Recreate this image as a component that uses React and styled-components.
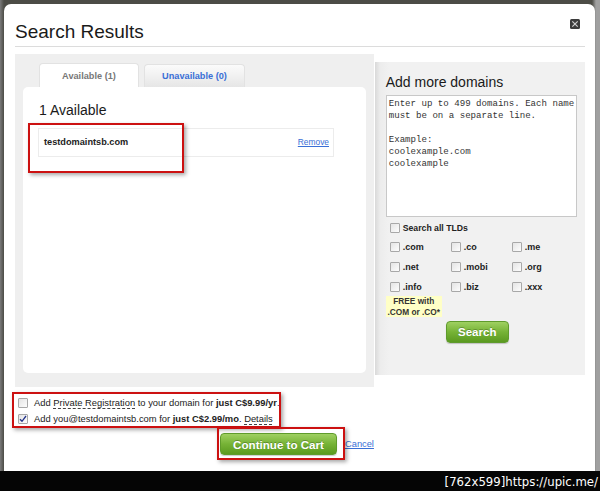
import React from "react";
import styled, { createGlobalStyle } from "styled-components";

const Global = createGlobalStyle`
  html, body { margin: 0; padding: 0; }
  body { font-family: "Liberation Sans", Arial, sans-serif; color: #222; }
`;

const Frame = styled.div`
  width: 600px;
  height: 491px;
  display: flex;
  flex-direction: column;
  background: linear-gradient(90deg, #7a7a7a 0px, #4c4c46 4px, #4c4c46 592px, #a0a0a0 596px);
  overflow: hidden;
`;

const Modal = styled.div`
  margin: 4px 5px 0 4px;
  height: 467px;
  background: #fff;
  border-radius: 7px 7px 0 0;
  padding: 0 10px 0 11px;
  box-sizing: border-box;
  display: flex;
  flex-direction: column;
`;

const Header = styled.div`
  display: flex;
  align-items: flex-start;
  justify-content: space-between;
  padding: 17px 0 3px;
  border-bottom: 1px solid #dcdcdc;
`;

const Title = styled.h1`
  margin: 0;
  font-size: 19px;
  line-height: 22px;
  font-weight: normal;
  color: #1a1a1a;
`;

const CloseBtn = styled.div`
  width: 10px;
  height: 10px;
  margin: -2px 5px 0 0;
  display: flex;
`;

const Body = styled.div`
  display: flex;
  align-items: flex-start;
  gap: 1px;
  margin-top: 7px;
`;

const LeftPanel = styled.div`
  width: 360px;
  box-sizing: border-box;
  background: #efefef;
  padding: 9px 8px 14px;
  display: flex;
  flex-direction: column;
`;

const Tabs = styled.div`
  display: flex;
  gap: 5px;
  margin-left: 16px;
`;

const Tab = styled.div`
  width: ${p => (p.$active ? 100 : 101)}px;
  height: ${p => (p.$active ? 24 : 23)}px;
  margin-top: ${p => (p.$active ? 0 : 1)}px;
  box-sizing: border-box;
  display: flex;
  align-items: center;
  justify-content: center;
  font-size: 9.2px;
  font-weight: bold;
  border: 1px solid #e2e2e2;
  border-bottom: none;
  border-radius: 4px 4px 0 0;
  color: ${p => (p.$active ? "#777" : "#3a6fd6")};
  background: ${p => (p.$active ? "#fff" : "linear-gradient(#fbfbfb, #e6e6e6)")};
`;

const ResultsBox = styled.div`
  position: relative;
  height: 286px;
  background: #fff;
  border-radius: 5px;
  padding: 15px 0 0 15px;
  box-sizing: border-box;
`;

const Heading = styled.h2`
  margin: 0 0 10px 1px;
  font-size: 14px;
  line-height: 16px;
  font-weight: normal;
  color: #1a1a1a;
`;

const DomainRow = styled.div`
  width: 296px;
  height: 29px;
  box-sizing: border-box;
  border: 1px solid #ececec;
  display: flex;
  align-items: center;
  justify-content: space-between;
  padding: 0 4px 1px 5px;
`;

const DomainName = styled.span`
  font-size: 9.2px;
  font-weight: bold;
  color: #222;
`;

const Link = styled.a`
  font-size: ${p => p.$size || 8.4}px;
  color: #3a6fd6;
  text-decoration: underline;
  cursor: pointer;
`;

const Annotation = styled.div`
  position: absolute;
  left: ${p => p.$l}px;
  top: ${p => p.$t}px;
  width: ${p => p.$w}px;
  height: ${p => p.$h}px;
  box-sizing: border-box;
  border: 2px solid #cc1111;
  box-shadow: 2px 2px 4px rgba(0, 0, 0, 0.35);
  pointer-events: none;
`;

const RightPanel = styled.div`
  width: 211px;
  height: 313px;
  margin-top: 8px;
  box-sizing: border-box;
  background: linear-gradient(90deg, #d9d9d9 0px, #ececec 5px, #f1f1f1 14px);
  padding: 12px 0 0 11px;
  display: flex;
  flex-direction: column;
`;

const SubHeading = styled.h3`
  margin: 0 0 5px;
  font-size: 14px;
  line-height: 16px;
  font-weight: normal;
  color: #1a1a1a;
`;

const DomainsInput = styled.div`
  width: 191px;
  height: 122px;
  box-sizing: border-box;
  border: 1px solid #c8c8c8;
  background: #fff;
  padding: 2px 2px;
  font-family: "Liberation Mono", "Courier New", monospace;
  font-size: 9.1px;
  line-height: 12px;
  color: #333;
  white-space: pre;
  overflow: hidden;
`;

const CheckRow = styled.label`
  display: flex;
  align-items: center;
  gap: ${p => p.$gap || 3}px;
  height: ${p => p.$h || 12}px;
  font-size: ${p => p.$size || 9}px;
  font-weight: ${p => (p.$bold ? "bold" : "normal")};
  color: #222;
  white-space: nowrap;
`;

const Box = styled.span`
  width: 10px;
  height: 10px;
  box-sizing: border-box;
  border: 1px solid #a8a8a8;
  border-radius: 1px;
  background: linear-gradient(135deg, #e4e4e4, #fdfdfd);
  display: flex;
  align-items: center;
  justify-content: center;
  flex: none;
`;

const Check = ({ checked }) => (
  <Box>
    {checked && (
      <svg width="8" height="8" viewBox="0 0 8 8">
        <path d="M1 4.2 L3 6.3 L7 1" fill="none" stroke="#23338a" strokeWidth="1.3" />
      </svg>
    )}
  </Box>
);

const TldArea = styled.div`
  margin: 5px 0 0 4px;
  display: flex;
  flex-direction: column;
`;

const TldGrid = styled.div`
  display: grid;
  grid-template-columns: 61px 61px 61px;
  row-gap: 8px;
  margin-top: 7px;
`;

const FreeBadge = styled.div`
  width: 56px;
  margin: 3px 0 0 -4px;
  background: #ffffc6;
  font-size: 8.3px;
  font-weight: bold;
  line-height: 10.5px;
  text-align: center;
  color: #333;
`;

const GreenButton = styled.button`
  width: ${p => p.$w}px;
  height: 22px;
  padding: 0;
  border: 1px solid #5f9b2c;
  border-radius: 4px;
  background: linear-gradient(#9fd061, #76b336 50%, #5b9a20);
  color: #fff;
  font-family: "Liberation Sans", Arial, sans-serif;
  font-size: ${p => p.$size}px;
  font-weight: bold;
  text-shadow: 0 -1px 0 rgba(0, 0, 0, 0.25);
  box-shadow: 0 1px 1px rgba(0, 0, 0, 0.2);
  cursor: pointer;
`;

const SearchWrap = styled.div`
  margin: 4px 0 0 60px;
  display: flex;
`;

const Options = styled.div`
  position: relative;
  margin: 8px 0 0 3px;
  display: flex;
  flex-direction: column;
  align-self: flex-start;
`;

const OptionText = styled.span`
  line-height: 16px;
`;

const Dotted = styled.span`
  text-decoration-line: underline;
  text-decoration-style: dashed;
  text-decoration-color: #444;
  text-underline-offset: 2px;
`;

const Actions = styled.div`
  position: relative;
  display: flex;
  align-items: center;
  gap: 8px;
  margin: 6px 0 0 205px;
`;

const BottomBar = styled.div`
  height: 20px;
  background: #050505;
  color: #fff;
  display: flex;
  align-items: center;
  justify-content: flex-end;
  padding-right: 2px;
  font-family: "DejaVu Sans Condensed", "DejaVu Sans", sans-serif;
  font-size: 13px;
`;

const tlds = [".com", ".co", ".me", ".net", ".mobi", ".org", ".info", ".biz", ".xxx"];

export default function App() {
  return (
    <>
      <Global />
      <Frame>
        <Modal>
          <Header>
            <Title>Search Results</Title>
            <CloseBtn>
              <svg width="10" height="10" viewBox="0 0 10 10">
                <rect x="0" y="0" width="10" height="10" rx="1.5" fill="#3c3c3c" />
                <path d="M2.3 2.3 L7.7 7.7 M7.7 2.3 L2.3 7.7" stroke="#cfcfcf" strokeWidth="1.2" />
              </svg>
            </CloseBtn>
          </Header>
          <Body>
            <LeftPanel>
              <Tabs>
                <Tab $active>Available (1)</Tab>
                <Tab>Unavailable (0)</Tab>
              </Tabs>
              <ResultsBox>
                <Heading>1 Available</Heading>
                <DomainRow>
                  <DomainName>testdomaintsb.com</DomainName>
                  <Link>Remove</Link>
                </DomainRow>
                <Annotation $l={5} $t={36} $w={156} $h={50} />
              </ResultsBox>
            </LeftPanel>
            <RightPanel>
              <SubHeading>Add more domains</SubHeading>
              <DomainsInput>
                {"Enter up to 499 domains. Each name\nmust be on a separate line.\n\nExample:\ncoolexample.com\ncoolexample"}
              </DomainsInput>
              <TldArea>
                <CheckRow $bold $size={8.7}>
                  <Check /> Search all TLDs
                </CheckRow>
                <TldGrid>
                  {tlds.map(t => (
                    <CheckRow key={t} $bold $size={9}>
                      <Check /> {t}
                    </CheckRow>
                  ))}
                </TldGrid>
                <FreeBadge>
                  FREE with
                  <br />
                  .COM or .CO*
                </FreeBadge>
              </TldArea>
              <SearchWrap>
                <GreenButton $w={63} $size={11.5}>Search</GreenButton>
              </SearchWrap>
            </RightPanel>
          </Body>
          <Options>
            <CheckRow $h={16} $gap={6} $size={9.4}>
              <Check />
              <OptionText>
                Add <Dotted>Private Registration</Dotted> to your domain for <b>just C$9.99/yr</b>.
              </OptionText>
            </CheckRow>
            <CheckRow $h={16} $gap={6} $size={9.4}>
              <Check checked />
              <OptionText>
                Add you@testdomaintsb.com for <b>just C$2.99/mo</b>. <Dotted>Details</Dotted>
              </OptionText>
            </CheckRow>
            <Annotation $l={-6} $t={-3} $w={269} $h={36} />
          </Options>
          <Actions>
            <GreenButton $w={117} $size={11.6}>Continue to Cart</GreenButton>
            <Link $size={9.3}>Cancel</Link>
            <Annotation $l={-3} $t={-6} $w={128} $h={33} />
          </Actions>
        </Modal>
        <BottomBar>[762x599]https://upic.me/</BottomBar>
      </Frame>
    </>
  );
}
